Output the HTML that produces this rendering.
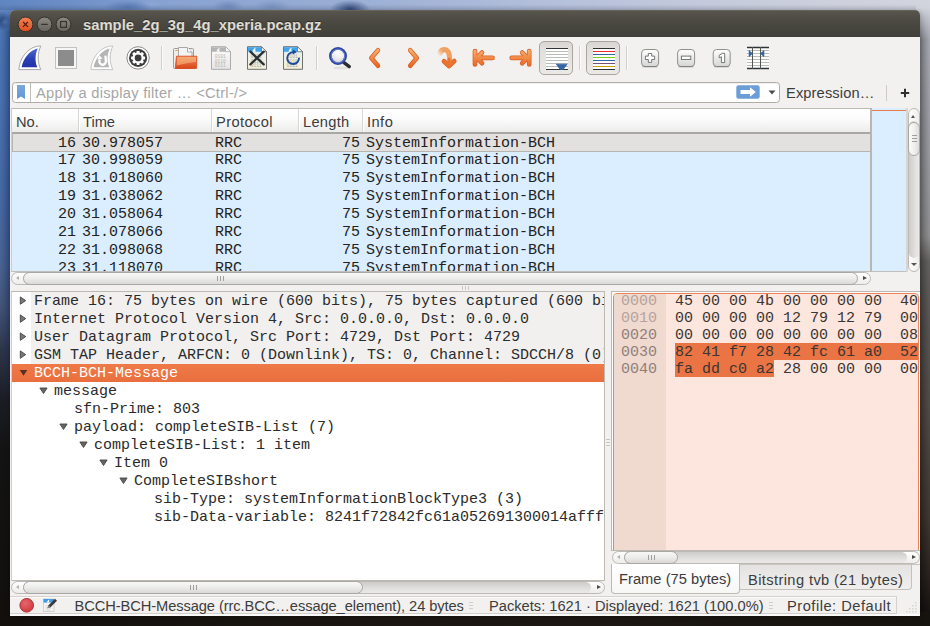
<!DOCTYPE html>
<html>
<head>
<meta charset="utf-8">
<title>sample_2g_3g_4g_xperia.pcap.gz</title>
<style>
*{box-sizing:border-box;margin:0;padding:0}
html,body{width:930px;height:626px;overflow:hidden}
body{position:relative;background:#15110d;font-family:"Liberation Sans",sans-serif;color:#3c3c3c}
.abs{position:absolute}
.ui{font-family:"Liberation Sans",sans-serif;font-size:14.67px;color:#3c3c3c;white-space:nowrap;line-height:18px}
.mono{font-family:"Liberation Mono",monospace;font-size:15px;white-space:pre;line-height:18px;color:#222}
/* wallpaper */
#wp-top{left:0;top:0;width:930px;height:14px;background:
 radial-gradient(ellipse 24px 7px at 128px 7px,rgba(60,95,160,.55),transparent),
 radial-gradient(ellipse 14px 5px at 150px 4px,rgba(150,175,220,.5),transparent),
 radial-gradient(ellipse 16px 6px at 228px 6px,rgba(70,100,155,.4),transparent),
 radial-gradient(ellipse 18px 6px at 272px 6px,rgba(70,100,155,.3),transparent),
 radial-gradient(ellipse 20px 9px at 350px 9px,rgba(25,50,100,.8),transparent),
 linear-gradient(180deg,transparent 0,transparent 4px,rgba(0,0,20,.14) 11px),
 linear-gradient(90deg,#6086c2 0,#6b8dc6 60px,#7897cb 110px,#88a3d2 170px,#90a8d2 260px,#9eb1d6 380px,#b3bfdb 540px,#c4cadc 700px,#cfd2dd 860px,#d2d4de 930px)}
#wp-left{left:0;top:10px;width:14px;height:616px;background:
 radial-gradient(ellipse 5px 4px at 5px 12px,rgba(130,160,210,.45),transparent),
 radial-gradient(ellipse 9px 10px at 2px 11px,rgba(22,50,105,.75),transparent),
 linear-gradient(180deg,#5f85c1 0,#4d76b5 24px,#4b73b1 90px,#486aa6 190px,#4a6592 255px,#46567a 295px,#2e3648 340px,#1b1d24 390px,#131313 440px,#120f0c 616px)}
#wp-left:before{content:"";position:absolute;left:0;top:0;width:14px;height:616px;background:linear-gradient(90deg,rgba(10,30,80,0) 0,rgba(10,30,80,.36) 10px);-webkit-mask:linear-gradient(180deg,transparent 0,#000 22px,#000 290px,transparent 400px);mask:linear-gradient(180deg,transparent 0,#000 22px,#000 290px,transparent 400px)}
#wp-right{left:916px;top:0;width:14px;height:626px;background:
 linear-gradient(90deg,rgba(0,0,0,.44) 4px,rgba(0,0,0,.16) 14px) 0 40px/14px 600px no-repeat,
 linear-gradient(180deg,#d2d4de 0,#c8cbd5 40px,#bcbec6 120px,#b2b3b8 200px,#aeaeb0 236px,#787673 262px,#6a6765 320px,#5e5852 420px,#4a413b 520px,#2a221d 590px,#17130f 620px)}
#wp-right:before{content:"";position:absolute;left:0;top:0;width:14px;height:40px;background:linear-gradient(90deg,rgba(0,0,0,.44) 4px,rgba(0,0,0,.16) 14px);-webkit-mask:linear-gradient(180deg,transparent 8px,#000 40px);mask:linear-gradient(180deg,transparent 8px,#000 40px)}
#wp-bottom{left:0;top:612px;width:930px;height:14px;background:linear-gradient(90deg,#120f0c 0,#1a1511 300px,#1c1712 600px,#16120e 930px)}
/* window */
#win{left:10px;top:10px;width:910px;height:606px;background:#f2f1f0;border-radius:5px 5px 0 0;box-shadow:0 1px 5px rgba(0,0,0,.25);overflow:hidden}
#titlebar{left:0;top:0;width:910px;height:27px;background:linear-gradient(180deg,#57554c 0,#514f47 5px,#47463f 15px,#3f3e39 27px);border-top:1px solid #66635a}
#title{left:73px;top:5px;font-weight:bold;font-size:14.8px;color:#dfdbd2;white-space:nowrap;line-height:18px;text-shadow:0 -1px 0 rgba(0,0,0,.4)}
.wbtn{width:16px;height:16px;border-radius:50%;top:6px;border:1px solid #33312c}

.sbo{border:1px solid #bdbab5;border-radius:7px;background:linear-gradient(#fefefe,#eeedeb)}
.sbov{border:1px solid #bdbab5;border-radius:7px;background:linear-gradient(90deg,#fefefe,#eeedeb)}
.trh{background:linear-gradient(#cdccc9,#e4e3e1 70%,#e9e8e6);border-radius:6px}
.thh{background:linear-gradient(#f8f8f7,#ececeb 50%,#dad9d7);border:1px solid #a9a7a2;border-radius:7px}
.trv{background:linear-gradient(90deg,#cdccc9,#e4e3e1 70%,#e9e8e6);border-radius:6px}
.thv{background:linear-gradient(90deg,#fbfbfa,#f0f0ef 50%,#dddcda);border:1px solid #a9a7a2;border-radius:7px}
.tri{width:0;height:0;border-style:solid}
.grip-h{width:7px;height:5px;background:linear-gradient(90deg,#a19f9c 0 1px,transparent 1px 3px,#a19f9c 3px 4px,transparent 4px 6px,#a19f9c 6px 7px)}
.grip-v{width:5px;height:7px;background:linear-gradient(#a19f9c 0 1px,transparent 1px 3px,#a19f9c 3px 4px,transparent 4px 6px,#a19f9c 6px 7px)}
.sgrip{width:4px;height:7px;background:linear-gradient(#d3d0cb 0 1px,transparent 1px 3px,#d3d0cb 3px 4px,transparent 4px 6px,#d3d0cb 6px 7px)}
</style>
</head>
<body>
<div id="wp-top" class="abs"></div>
<div id="wp-left" class="abs"></div>
<div id="wp-right" class="abs"></div>
<div id="wp-bottom" class="abs"></div>

<div id="win" class="abs">
  <div id="titlebar" class="abs">
    <svg class="abs" style="left:0;top:-1px" width="80" height="27" viewBox="10 10 80 27">
      <defs>
        <linearGradient id="gCl" x1="0" y1="0" x2="0" y2="1"><stop offset="0" stop-color="#f38257"/><stop offset="1" stop-color="#df4f1c"/></linearGradient>
        <linearGradient id="gGr" x1="0" y1="0" x2="0" y2="1"><stop offset="0" stop-color="#8c8a82"/><stop offset="1" stop-color="#64625b"/></linearGradient>
      </defs>
      <circle cx="25.500" cy="24.400" r="7.400" fill="url(#gCl)" stroke="#33312c" stroke-width="1"/>
      <circle cx="44.500" cy="24.400" r="7.400" fill="url(#gGr)" stroke="#33312c" stroke-width="1"/>
      <circle cx="63.500" cy="24.400" r="7.400" fill="url(#gGr)" stroke="#33312c" stroke-width="1"/>
      <path d="M23 21.900l5 5M28 21.900l-5 5" stroke="#4a1e0c" stroke-width="1.300"/>
      <path d="M41.200 24.400h6.600" stroke="#35342f" stroke-width="1.300"/>
      <rect x="60.600" y="21.500" width="5.800" height="5.800" fill="none" stroke="#35342f" stroke-width="1.200"/>
    </svg>
    <div id="title" class="abs">sample_2g_3g_4g_xperia.pcap.gz</div>
  </div>
<!--TOOLBAR-->
<svg class="abs" style="left:0;top:27px" width="910" height="44" viewBox="10 37 910 44">
<defs>
<linearGradient id="gBlue" x1="0" y1="0" x2="0" y2="1"><stop offset="0" stop-color="#5068d0"/><stop offset=".55" stop-color="#2b3fb4"/><stop offset="1" stop-color="#2233a6"/></linearGradient>
<linearGradient id="gOr" gradientUnits="userSpaceOnUse" x1="0" y1="48" x2="0" y2="68"><stop offset="0" stop-color="#f8b676"/><stop offset="1" stop-color="#e85f1c"/></linearGradient>
<linearGradient id="gFold" x1="0" y1="0" x2="0" y2="1"><stop offset="0" stop-color="#f28a5a"/><stop offset="1" stop-color="#d9451a"/></linearGradient>
<linearGradient id="gBtn" x1="0" y1="0" x2="0" y2="1"><stop offset="0" stop-color="#ffffff"/><stop offset="1" stop-color="#d6d6d6"/></linearGradient>
<linearGradient id="gDoc" x1="0" y1="0" x2="0" y2="1"><stop offset="0" stop-color="#fdfdfd"/><stop offset="1" stop-color="#e6e6e6"/></linearGradient>
<linearGradient id="gDocY" x1="0" y1="0" x2="0" y2="1"><stop offset="0" stop-color="#bfe0f7"/><stop offset=".35" stop-color="#eaf1ea"/><stop offset="1" stop-color="#f3f0d8"/></linearGradient>
<path id="fin" d="M40.800 46 C30 45.800 19.800 56 18.900 69.600 L40.800 69.600 C37.300 62 37.300 53.500 40.800 46Z"/>
<path id="finIn" d="M37.800 48.600 C31 49.500 23.500 57.500 21.600 67.300 L37.300 67.300 C34.800 61.500 35 54.500 37.800 48.600Z"/>
</defs>
<!-- fin start -->
<use href="#fin" fill="#fff" stroke="#a8a8a8" stroke-width="1"/>
<use href="#finIn" fill="url(#gBlue)"/>
<!-- stop -->
<rect x="55.5" y="47.5" width="21" height="21" fill="#f6f6f6" stroke="#c2c2c2"/>
<rect x="58" y="50" width="16" height="16" fill="#8c8c8c"/>
<!-- fin restart -->
<g transform="translate(72 0)">
<use href="#fin" fill="#fff" stroke="#c4c4c4" stroke-width="1"/>
<use href="#finIn" fill="#b5b5b5"/>
<path d="M33.400 55.600 L33.900 61.200 A3.300 3.300 0 1 1 28 59.400" fill="none" stroke="#fff" stroke-width="2.300"/>
<path d="M25.300 59.400 L30.600 58.400 L27.200 55.300Z" fill="#fff"/>
</g>
<!-- gear -->
<circle cx="138.1" cy="57.9" r="11.2" fill="#fff" stroke="#8a8a8a" stroke-width="1"/>
<circle cx="138.1" cy="57.9" r="9.1" fill="#3c3c3c"/>
<g transform="translate(138.1 57.9)" fill="#fff">
<circle r="5.6"/>
<g id="teeth"><rect x="-1.5" y="-7" width="3" height="14" rx=".6"/><rect x="-1.5" y="-7" width="3" height="14" rx=".6" transform="rotate(45)"/><rect x="-1.5" y="-7" width="3" height="14" rx=".6" transform="rotate(90)"/><rect x="-1.5" y="-7" width="3" height="14" rx=".6" transform="rotate(135)"/></g>
<circle r="3.4" fill="#3c3c3c"/>
</g>
<!-- separators -->
<g stroke="#d2d0cd" stroke-width="1"><path d="M161.5 46v24M316.5 46v24M579.5 46v24M626.5 46v24"/></g>
<g stroke="#fbfbfa" stroke-width="1"><path d="M162.5 46v24M317.5 46v24M580.5 46v24M627.5 46v24"/></g>
<!-- folder -->
<rect x="173.5" y="48.5" width="20" height="20" rx="1" fill="#ededed" stroke="#9c9c9c"/>
<path d="M175.3 50.5h2.6" stroke="#f0a040" stroke-width="1"/>
<path d="M178.5 47.5h9l4.5 4.5v14h-13.5z" fill="#f4f4f4" stroke="#a8a8a8"/>
<path d="M187.5 47.5v4.5h4.5" fill="#fff" stroke="#a8a8a8"/>
<path d="M176.5 56.2h20.3l-.3 12.3h-21.3z" fill="url(#gFold)" stroke="#d8481a" stroke-width=".8"/>
<path d="M177.3 57h18.7l-.1 5c-6 .5-12 1.500-19.200 3.500z" fill="#f7c58a" opacity=".55"/>
<!-- doc gray -->
<g id="docg">
<path d="M211.500 46.700h14l5 5v17.600h-19z" fill="url(#gDoc)" stroke="#ababab"/>
<path d="M212 47.200h13.500l4.500 4.500h-18z" fill="#b4b4b4"/>
<path d="M216.500 51.700c.3-2.200 1.600-3.600 3.400-4.300-.8 1.500-.8 3 0 4.300z" fill="#f6f6f6"/>
<path d="M225.500 46.700v5h5z" fill="#fbfbfb" stroke="#ababab" stroke-width=".8"/>
<g font-family="Liberation Mono,monospace" font-size="4.600" fill="#b4b4b4"><text x="214.800" y="58">0101</text><text x="214.800" y="62.600">0110</text><text x="214.800" y="67.300">0111</text></g>
</g>
<!-- doc X -->
<g transform="translate(36 0)">
<path d="M211.500 46.700h14l5 5v17.600h-19z" fill="url(#gDocY)" stroke="#6f6f6f"/>
<path d="M212 47.200h13.500l4.500 4.500h-18z" fill="#42a5ec"/>
<path d="M216.500 51.700c.3-2.200 1.600-3.600 3.400-4.300-.8 1.500-.8 3 0 4.300z" fill="#f6fbff"/>
<path d="M225.500 46.700v5h5z" fill="#fdfdf6" stroke="#6f6f6f" stroke-width=".8"/>
<g font-family="Liberation Mono,monospace" font-size="4.600" fill="#a8a89f"><text x="214.800" y="58">0101</text><text x="214.800" y="62.600">0110</text><text x="214.800" y="67.300">0111</text></g>
<path d="M214.400 51.600l13.300 12.800M227.700 51.600l-13.300 12.800" stroke="#2b3032" stroke-width="2.300" stroke-linecap="round"/>
</g>
<!-- doc reload -->
<g transform="translate(72 0)">
<path d="M211.500 46.700h14l5 5v17.600h-19z" fill="url(#gDocY)" stroke="#6f6f6f"/>
<path d="M212 47.200h13.500l4.500 4.500h-18z" fill="#42a5ec"/>
<path d="M216.500 51.700c.3-2.200 1.600-3.600 3.400-4.300-.8 1.500-.8 3 0 4.300z" fill="#f6fbff"/>
<path d="M225.500 46.700v5h5z" fill="#fdfdf6" stroke="#6f6f6f" stroke-width=".8"/>
<g font-family="Liberation Mono,monospace" font-size="4.600" fill="#a8a89f"><text x="214.800" y="58">0101</text><text x="214.800" y="62.600">0110</text><text x="214.800" y="67.300">0111</text></g>
<path d="M227 57.600a5.900 5.900 0 1 1 -5.600-5.400" fill="none" stroke="#1f4a9c" stroke-width="1.900"/>
<path d="M220.800 49.400l4.200 2.500-4.200 2.600z" fill="#1f4a9c"/>
</g>
<!-- magnifier -->
<ellipse cx="341" cy="68" rx="8" ry="1.500" fill="#000" opacity=".07"/>
<path d="M344 62.600l5.300 4" stroke="#2b2b2b" stroke-width="3.400" stroke-linecap="round"/>
<radialGradient id="gGl" cx=".55" cy=".3" r=".7"><stop offset="0" stop-color="#ffffff"/><stop offset=".5" stop-color="#ededed"/><stop offset="1" stop-color="#d4d4d4"/></radialGradient>
<circle cx="338" cy="56" r="7.600" fill="url(#gGl)" stroke="#2a469c" stroke-width="2.800"/>
<circle cx="338" cy="56" r="6.900" fill="none" stroke="#6f88d6" stroke-width=".9"/>
<!-- chevrons -->
<g fill="none" stroke-linecap="round" stroke-linejoin="round">
<path d="M378 50.200l-6.700 7.800 6.700 7.800" stroke="#db5a1c" stroke-width="4.500"/>
<path d="M378 50.200l-6.700 7.800 6.700 7.800" stroke="url(#gOr)" stroke-width="3"/>
<path d="M410.200 50.200l6.600 7.800-6.600 7.800" stroke="#db5a1c" stroke-width="4.500"/>
<path d="M410.200 50.200l6.600 7.800-6.600 7.800" stroke="url(#gOr)" stroke-width="3"/>
<!-- jump -->
<linearGradient id="gJt" gradientUnits="userSpaceOnUse" x1="438" y1="55" x2="445" y2="49"><stop offset="0" stop-color="#f0a060" stop-opacity="0"/><stop offset=".7" stop-color="#f0a060" stop-opacity="1"/></linearGradient>
<path d="M440 53.500c.3-3.800 5.600-5.200 8-2 1.700 2.300 1.900 5.600 1.400 12" stroke="url(#gJt)" stroke-width="5.200"/>
<path d="M444 61.300l5 4.800 5.200-5" stroke="#dc5f22" stroke-width="4.700"/>
<path d="M444 61.300l5 4.800 5.200-5M449 64v-5" stroke="#ec7431" stroke-width="3.200"/>
<!-- first -->
<path d="M475 51.200v13.300M477 57.900h15.500M482 52.600l-5.200 5.300 5.200 5.300" stroke="#dc5f22" stroke-width="4.700"/>
<path d="M475 51.200v13.300M477 57.900h15.500M482 52.600l-5.200 5.300 5.200 5.300" stroke="url(#gOr)" stroke-width="3.200"/>
<!-- last -->
<path d="M529.200 51.200v13.300M527.200 57.900h-15.500M522.200 52.600l5.200 5.300-5.200 5.300" stroke="#dc5f22" stroke-width="4.700"/>
<path d="M529.200 51.200v13.300M527.200 57.900h-15.500M522.200 52.600l5.200 5.300-5.200 5.300" stroke="url(#gOr)" stroke-width="3.200"/>
</g>
<!-- toggle buttons -->
<linearGradient id="gTog" x1="0" y1="0" x2="0" y2="1"><stop offset="0" stop-color="#d6d5d2"/><stop offset=".2" stop-color="#e0dfdc"/><stop offset="1" stop-color="#eae9e6"/></linearGradient>
<rect x="539.500" y="41.500" width="33" height="33" rx="4.500" fill="url(#gTog)" stroke="#aaa69f"/>
<rect x="586.500" y="41.500" width="33" height="33" rx="4.500" fill="url(#gTog)" stroke="#aaa69f"/>
<rect x="546" y="48" width="22" height="22" fill="#fff"/>
<g stroke="#babdb6" stroke-width="1"><path d="M546 51.500h22M546 54.500h22M546 57.500h22M546 60.500h22M546 63.500h22M546 66.500h22"/></g>
<g stroke="#2e3436" stroke-width="1.200"><path d="M546 48.500h22M546 69.500h22"/></g>
<path d="M556.300 64.200h10.800l-4 5.300h-2.800z" fill="#3465a4" stroke="#3465a4" stroke-width=".8" stroke-linejoin="round"/>
<rect x="593" y="48" width="22" height="22" fill="#fff"/>
<g stroke-width="1.200"><path d="M593 48.500h22" stroke="#2e3436"/><path d="M593 51.500h22" stroke="#ef2929"/><path d="M593 54.500h22" stroke="#3465a4"/><path d="M593 57.500h22" stroke="#73d216"/><path d="M593 60.500h22" stroke="#3465a4"/><path d="M593 63.500h22" stroke="#75507b"/><path d="M593 66.500h22" stroke="#c4a000"/><path d="M593 69.500h22" stroke="#2e3436"/></g>
<!-- zoom buttons -->
<g id="zb"><rect x="641.600" y="49.500" width="17" height="17" rx="3.500" fill="url(#gBtn)" stroke="#8f908a"/><path d="M642.500 66.800h15" stroke="#6a6b66" stroke-width=".8" opacity=".7"/></g>
<use href="#zb" x="36"/><use href="#zb" x="71.600"/>
<path d="M648.300 53.500h3.400v2.600h2.900v3.400h-2.900v2.900h-3.400v-2.900h-2.900v-3.400h2.900z" fill="#fff" stroke="#686a66" stroke-width=".9"/>
<rect x="681.400" y="56.100" width="9.400" height="3.400" fill="#fff" stroke="#686a66" stroke-width=".9"/>
<path d="M719.200 55.300l3.200-2h2.300v9.300h-3.300v-5.800l-2.200 1z" fill="#fff" stroke="#686a66" stroke-width=".9" stroke-linejoin="round"/>
<!-- resize cols -->
<rect x="747" y="47" width="22" height="22" fill="#fff"/>
<g stroke="#babdb6" stroke-width="1"><path d="M747 50.500h22M747 53.500h22M747 56.500h22M747 59.500h22M747 62.500h22M747 65.500h22"/></g>
<g stroke="#2e3436" stroke-width="1.300"><path d="M747 47.500h22M747 68.500h22"/></g>
<g stroke="#555753" stroke-width="1"><path d="M752.500 47v22M760.500 47v22"/></g>
<path d="M749 50.500l3.600 3.100-3.600 3.100z" fill="#3465a4" stroke="#3465a4" stroke-width=".6" stroke-linejoin="round"/>
<path d="M764 50.500l-3.600 3.100 3.600 3.100z" fill="#3465a4" stroke="#3465a4" stroke-width=".6" stroke-linejoin="round"/>

</svg>
<!--/TOOLBAR-->
<!--FILTER-->
<div class="abs" style="left:2px;top:72px;width:768px;height:21px;background:#fff;border:1px solid #b0aca6;border-radius:3.500px;box-shadow:inset 0 1px 1px rgba(0,0,0,.06)"></div>
<div class="abs" style="left:20px;top:73px;width:1px;height:19px;background:#c1beb9"></div>
<svg class="abs" style="left:7px;top:75px" width="8" height="14" viewBox="0 0 8 14"><defs><linearGradient id="gBk" x1="0" y1="0" x2="0" y2="1"><stop offset="0" stop-color="#7ca8dc"/><stop offset="1" stop-color="#6197d5"/></linearGradient></defs><path d="M0 0h8v14l-4-2.400-4 2.400z" fill="url(#gBk)"/></svg>
<div id="ph" class="abs ui" style="left:26px;top:74px;color:#a6a6a6;letter-spacing:.28px">Apply a display filter … &lt;Ctrl-/&gt;</div>
<svg class="abs" style="left:726px;top:75px" width="24" height="14" viewBox="0 0 24 14"><rect x=".3" y=".2" width="23.400" height="13.600" rx="2.200" fill="#6c9dd6"/><path d="M4.500 5h9.500v-2.800l5.800 4.800-5.800 4.800v-2.800h-9.500z" fill="#fff"/></svg>
<svg class="abs" style="left:758px;top:80px" width="8" height="5" viewBox="0 0 8 5"><path d="M.6 .5h6.800l-3.400 4z" fill="#4a4a4a"/></svg>
<div id="expr" class="abs ui" style="left:776px;top:74px;letter-spacing:.12px">Expression…</div>
<div class="abs" style="left:876px;top:75px;width:1px;height:16px;background:#d0cdc8"></div>
<svg class="abs" style="left:890px;top:78px" width="10" height="10" viewBox="0 0 10 10"><path d="M5 .8v8.400M.8 5h8.400" stroke="#2f2f2f" stroke-width="2"/></svg>
<!--/FILTER-->
<!--PLIST-->
<div id="plist" class="abs" style="left:1px;top:98px;width:859px;height:163px;background:#dbeeff;border-top:1px solid #bebab4;border-left:1px solid #cfccc7;overflow:hidden">
<div class="abs" style="left:0;top:0;width:860px;height:24px;background:linear-gradient(#ffffff 0,#fbfbfb 45%,#ececeb 100%);border-bottom:1px solid #a9a7a3"></div>
<div class="abs" style="left:66px;top:0;width:1px;height:23px;background:#d8d6d2"></div><div class="abs" style="left:67px;top:0;width:1px;height:23px;background:#fff"></div>
<div class="abs" style="left:199px;top:0;width:1px;height:23px;background:#d8d6d2"></div><div class="abs" style="left:200px;top:0;width:1px;height:23px;background:#fff"></div>
<div class="abs" style="left:286px;top:0;width:1px;height:23px;background:#d8d6d2"></div><div class="abs" style="left:287px;top:0;width:1px;height:23px;background:#fff"></div>
<div class="abs" style="left:350px;top:0;width:1px;height:23px;background:#d8d6d2"></div><div class="abs" style="left:351px;top:0;width:1px;height:23px;background:#fff"></div>
<div class="abs ui hd" style="left:4px;top:4px;letter-spacing:0px">No.</div>
<div class="abs ui hd" style="left:71px;top:4px;letter-spacing:0px">Time</div>
<div class="abs ui hd" style="left:204px;top:4px;letter-spacing:.4px">Protocol</div>
<div class="abs ui hd" style="left:291px;top:4px;letter-spacing:.27px">Length</div>
<div class="abs ui hd" style="left:355px;top:4px;letter-spacing:.45px">Info</div>
<div class="abs" style="left:0;top:24px;width:860px;height:19px;background:#e2e1e0;border:1px solid #b7b5b2;border-top-color:#a9a7a3"></div>
<div class="abs mono" style="left:0;top:26px;width:64px;text-align:right">16</div>
<div class="abs mono" style="left:70px;top:26px">30.978057</div>
<div class="abs mono" style="left:203px;top:26px">RRC</div>
<div class="abs mono" style="left:288px;top:26px;width:60px;text-align:right">75</div>
<div class="abs mono" style="left:354px;top:26px">SystemInformation-BCH</div>
<div class="abs mono" style="left:0;top:43px;width:64px;text-align:right">17</div>
<div class="abs mono" style="left:70px;top:43px">30.998059</div>
<div class="abs mono" style="left:203px;top:43px">RRC</div>
<div class="abs mono" style="left:288px;top:43px;width:60px;text-align:right">75</div>
<div class="abs mono" style="left:354px;top:43px">SystemInformation-BCH</div>
<div class="abs mono" style="left:0;top:61px;width:64px;text-align:right">18</div>
<div class="abs mono" style="left:70px;top:61px">31.018060</div>
<div class="abs mono" style="left:203px;top:61px">RRC</div>
<div class="abs mono" style="left:288px;top:61px;width:60px;text-align:right">75</div>
<div class="abs mono" style="left:354px;top:61px">SystemInformation-BCH</div>
<div class="abs mono" style="left:0;top:79px;width:64px;text-align:right">19</div>
<div class="abs mono" style="left:70px;top:79px">31.038062</div>
<div class="abs mono" style="left:203px;top:79px">RRC</div>
<div class="abs mono" style="left:288px;top:79px;width:60px;text-align:right">75</div>
<div class="abs mono" style="left:354px;top:79px">SystemInformation-BCH</div>
<div class="abs mono" style="left:0;top:97px;width:64px;text-align:right">20</div>
<div class="abs mono" style="left:70px;top:97px">31.058064</div>
<div class="abs mono" style="left:203px;top:97px">RRC</div>
<div class="abs mono" style="left:288px;top:97px;width:60px;text-align:right">75</div>
<div class="abs mono" style="left:354px;top:97px">SystemInformation-BCH</div>
<div class="abs mono" style="left:0;top:115px;width:64px;text-align:right">21</div>
<div class="abs mono" style="left:70px;top:115px">31.078066</div>
<div class="abs mono" style="left:203px;top:115px">RRC</div>
<div class="abs mono" style="left:288px;top:115px;width:60px;text-align:right">75</div>
<div class="abs mono" style="left:354px;top:115px">SystemInformation-BCH</div>
<div class="abs mono" style="left:0;top:133px;width:64px;text-align:right">22</div>
<div class="abs mono" style="left:70px;top:133px">31.098068</div>
<div class="abs mono" style="left:203px;top:133px">RRC</div>
<div class="abs mono" style="left:288px;top:133px;width:60px;text-align:right">75</div>
<div class="abs mono" style="left:354px;top:133px">SystemInformation-BCH</div>
<div class="abs mono" style="left:0;top:151px;width:64px;text-align:right">23</div>
<div class="abs mono" style="left:70px;top:151px">31.118070</div>
<div class="abs mono" style="left:203px;top:151px">RRC</div>
<div class="abs mono" style="left:288px;top:151px;width:60px;text-align:right">75</div>
<div class="abs mono" style="left:354px;top:151px">SystemInformation-BCH</div>
</div>
<div class="abs" style="left:860px;top:98px;width:36.500px;height:163px;background:#dbeeff;border-left:2px solid #b9b5b0"></div>
<div class="abs" style="left:862px;top:100px;width:34.500px;height:1px;background:#ea7a4f"></div>
<div class="abs" style="left:1px;top:261px;width:896px;height:1px;background:#c3c0bb"></div>
<div class="abs sbo" style="left:1px;top:262px;width:860px;height:13px"></div>
<div class="abs trh" style="left:13px;top:263px;width:834px;height:11px"></div>
<div class="abs tri" style="left:6px;top:266px;border-width:2.500px 3.500px 2.500px 0;border-color:transparent #b3b1ae transparent transparent"></div>
<div class="abs tri" style="left:852.500px;top:266px;border-width:2.500px 0 2.500px 4px;border-color:transparent transparent transparent #4a4a4a"></div>
<div class="abs thh" style="left:13px;top:262px;width:834.500px;height:13px"></div>
<div class="abs grip-h" style="left:207px;top:266px"></div>
<div class="abs" style="left:896px;top:98px;width:1.500px;height:164px;background:#d8d5d0"></div>
<div class="abs sbov" style="left:897.500px;top:98px;width:12px;height:163.500px"></div>
<div class="abs trv" style="left:898.500px;top:111px;width:10px;height:137px"></div>
<div class="abs tri" style="left:901px;top:104.500px;border-width:0 2.500px 3px 2.500px;border-color:transparent transparent #555 transparent"></div>
<div class="abs tri" style="left:900.500px;top:252.500px;border-width:3.500px 3px 0 3px;border-color:#555 transparent transparent transparent"></div>
<div class="abs thv" style="left:897.500px;top:112px;width:12px;height:34px"></div>
<div class="abs grip-v" style="left:901.500px;top:125px"></div>
<!--/PLIST-->
<!--DETAIL-->
<div id="detail" class="abs" style="left:1px;top:281px;width:594px;height:290px;background:#fff;border:1px solid #bdb9b3;border-left-color:#d0cdc8;overflow:hidden">
<div class="abs" style="left:19px;top:0;width:580px;height:72px;background:#f1f0ef"></div>
<div class="abs" style="left:0;top:72px;width:600px;height:18px;background:linear-gradient(#ef7948,#e96f3e)"></div>
<div class="abs mono" style="left:22px;top:1px;color:#2b2b2b">Frame 16: 75 bytes on wire (600 bits), 75 bytes captured (600 bits)</div>
<svg class="abs" style="left:7px;top:4px" width="8" height="10" viewBox="0 0 8 10"><path d="M1.300 .9v7.400l5.400-3.700z" fill="#777" stroke="#444" stroke-width=".9" stroke-linejoin="round"/></svg>
<div class="abs mono" style="left:22px;top:19px;color:#2b2b2b">Internet Protocol Version 4, Src: 0.0.0.0, Dst: 0.0.0.0</div>
<svg class="abs" style="left:7px;top:22px" width="8" height="10" viewBox="0 0 8 10"><path d="M1.300 .9v7.400l5.400-3.700z" fill="#777" stroke="#444" stroke-width=".9" stroke-linejoin="round"/></svg>
<div class="abs mono" style="left:22px;top:37px;color:#2b2b2b">User Datagram Protocol, Src Port: 4729, Dst Port: 4729</div>
<svg class="abs" style="left:7px;top:40px" width="8" height="10" viewBox="0 0 8 10"><path d="M1.300 .9v7.400l5.400-3.700z" fill="#777" stroke="#444" stroke-width=".9" stroke-linejoin="round"/></svg>
<div class="abs mono" style="left:22px;top:55px;color:#2b2b2b">GSM TAP Header, ARFCN: 0 (Downlink), TS: 0, Channel: SDCCH/8 (0)</div>
<svg class="abs" style="left:7px;top:58px" width="8" height="10" viewBox="0 0 8 10"><path d="M1.300 .9v7.400l5.400-3.700z" fill="#777" stroke="#444" stroke-width=".9" stroke-linejoin="round"/></svg>
<div class="abs mono" style="left:22px;top:73px;color:#fff">BCCH-BCH-Message</div>
<svg class="abs" style="left:7px;top:77px" width="9" height="8" viewBox="0 0 9 8"><path d="M.7 1h7.600l-3.800 5.800z" fill="#5a3020"/></svg>
<div class="abs mono" style="left:42px;top:91px;color:#2b2b2b">message</div>
<svg class="abs" style="left:27px;top:95px" width="9" height="8" viewBox="0 0 9 8"><path d="M.9 1h7.200l-3.600 5.500z" fill="#666" stroke="#444" stroke-width=".9" stroke-linejoin="round"/></svg>
<div class="abs mono" style="left:62px;top:109px;color:#2b2b2b">sfn-Prime: 803</div>
<div class="abs mono" style="left:62px;top:127px;color:#2b2b2b">payload: completeSIB-List (7)</div>
<svg class="abs" style="left:47px;top:131px" width="9" height="8" viewBox="0 0 9 8"><path d="M.9 1h7.200l-3.600 5.500z" fill="#666" stroke="#444" stroke-width=".9" stroke-linejoin="round"/></svg>
<div class="abs mono" style="left:82px;top:145px;color:#2b2b2b">completeSIB-List: 1 item</div>
<svg class="abs" style="left:67px;top:149px" width="9" height="8" viewBox="0 0 9 8"><path d="M.9 1h7.200l-3.600 5.500z" fill="#666" stroke="#444" stroke-width=".9" stroke-linejoin="round"/></svg>
<div class="abs mono" style="left:102px;top:163px;color:#2b2b2b">Item 0</div>
<svg class="abs" style="left:87px;top:167px" width="9" height="8" viewBox="0 0 9 8"><path d="M.9 1h7.200l-3.600 5.500z" fill="#666" stroke="#444" stroke-width=".9" stroke-linejoin="round"/></svg>
<div class="abs mono" style="left:122px;top:181px;color:#2b2b2b">CompleteSIBshort</div>
<svg class="abs" style="left:107px;top:185px" width="9" height="8" viewBox="0 0 9 8"><path d="M.9 1h7.200l-3.600 5.500z" fill="#666" stroke="#444" stroke-width=".9" stroke-linejoin="round"/></svg>
<div class="abs mono" style="left:142px;top:199px;color:#2b2b2b">sib-Type: systemInformationBlockType3 (3)</div>
<div class="abs mono" style="left:142px;top:217px;color:#2b2b2b">sib-Data-variable: 8241f72842fc61a052691300014afffaddc0a2</div>
</div>
<div class="abs sbo" style="left:1px;top:571px;width:594px;height:13px"></div>
<div class="abs trh" style="left:13px;top:572px;width:568px;height:11px"></div>
<div class="abs tri" style="left:6px;top:575px;border-width:2.500px 3.500px 2.500px 0;border-color:transparent #b3b1ae transparent transparent"></div>
<div class="abs tri" style="left:586.500px;top:575px;border-width:2.500px 0 2.500px 4px;border-color:transparent transparent transparent #4a4a4a"></div>
<div class="abs thh" style="left:13px;top:571px;width:339.500px;height:13px"></div>
<div class="abs grip-h" style="left:180px;top:575px"></div>
<div class="abs" style="left:452px;top:276px;width:7px;height:4px;background:linear-gradient(90deg,#c9c6c1 0 1px,transparent 1px 3px,#c9c6c1 3px 4px,transparent 4px 6px,#c9c6c1 6px 7px)"></div>
<div class="abs" style="left:596px;top:429px;width:4px;height:7px;background:linear-gradient(#c9c6c1 0 1px,transparent 1px 3px,#c9c6c1 3px 4px,transparent 4px 6px,#c9c6c1 6px 7px)"></div>
<!--/DETAIL-->
<!--BYTES-->
<div id="bytes" class="abs" style="left:601px;top:281px;width:309px;height:260px;background:#fff;border:1px solid #bdb9b3;border-right:none;overflow:hidden">
<div class="abs" style="left:1px;top:1px;width:306px;height:262px;background:#fde6de;border:1px solid #ee8459;border-radius:4px 4px 0 0;overflow:hidden">
<div class="abs" style="left:0;top:0;width:52px;height:262px;background:#f0d9cf"></div>
<div class="abs" style="left:61px;top:49px;width:250px;height:17px;background:#ea7443"></div>
<div class="abs" style="left:61px;top:66px;width:99px;height:17px;background:#ea7443"></div>
<div class="abs mono" style="left:7px;top:-1px;line-height:17px;color:#b5a49d">0000</div>
<div class="abs mono" style="left:61px;top:-1px;line-height:17px;color:#3b3533">45 00 00 4b 00 00 00 00  40 11 00 00</div>
<div class="abs mono" style="left:7px;top:16px;line-height:17px;color:#b5a49d">0010</div>
<div class="abs mono" style="left:61px;top:16px;line-height:17px;color:#3b3533">00 00 00 00 12 79 12 79  00 37 00 00</div>
<div class="abs mono" style="left:7px;top:33px;line-height:17px;color:#8f7f79">0020</div>
<div class="abs mono" style="left:61px;top:33px;line-height:17px;color:#3b3533">00 00 00 00 00 00 00 00  08 00 00 00</div>
<div class="abs mono" style="left:7px;top:50px;line-height:17px;color:#8f7f79">0030</div>
<div class="abs mono" style="left:61px;top:50px;line-height:17px;color:#3b3533">82 41 f7 28 42 fc 61 a0  52 69 13 00</div>
<div class="abs mono" style="left:7px;top:67px;line-height:17px;color:#8f7f79">0040</div>
<div class="abs mono" style="left:61px;top:67px;line-height:17px;color:#3b3533">fa dd c0 a2 28 00 00 00  00 00 00 00</div>
</div></div>
<div class="abs sbo" style="left:602px;top:541px;width:307.500px;height:13px"></div>
<div class="abs trh" style="left:614px;top:542px;width:282.500px;height:11px"></div>
<div class="abs tri" style="left:607px;top:545px;border-width:2.500px 3.500px 2.500px 0;border-color:transparent #b3b1ae transparent transparent"></div>
<div class="abs tri" style="left:901.500px;top:545px;border-width:2.500px 0 2.500px 4px;border-color:transparent transparent transparent #4a4a4a"></div>
<div class="abs thh" style="left:614px;top:541px;width:53.500px;height:13px"></div>
<div class="abs grip-h" style="left:638px;top:545px"></div>
<div class="abs" style="left:728px;top:555px;width:174px;height:25px;background:linear-gradient(#e4e3e1,#f0efee);border:1px solid #c4c1bb;border-top:none;border-radius:0 0 4px 4px"></div>
<div class="abs" style="left:729px;top:554px;width:181px;height:1px;background:#c9c6c1"></div>
<div id="tab2" class="abs ui" style="left:738px;top:560.500px;letter-spacing:.39px">Bitstring tvb (21 bytes)</div>
<div class="abs" style="left:601px;top:554px;width:129px;height:30px;background:linear-gradient(#ffffff,#f7f7f6);border:1px solid #bdb9b3;border-top:none;border-radius:0 0 4px 4px"></div>
<div id="tab1" class="abs ui" style="left:609px;top:560px;letter-spacing:.04px">Frame (75 bytes)</div>
<!--/BYTES-->
<!--STATUS-->
<div class="abs" style="left:0;top:586px;width:887px;height:1px;background:#d5d2cd"></div>
<div class="abs" style="left:0;top:587px;width:886px;height:1px;background:#fbfbfa"></div>
<div class="abs" style="left:0;top:603px;width:887px;height:1px;background:#d2cfca"></div><div class="abs" style="left:886px;top:586px;width:1px;height:18px;background:#d5d2cd"></div>
<div class="abs" style="left:0;top:604px;width:910px;height:2px;background:#fafafa"></div>
<svg class="abs" style="left:8px;top:587px" width="17" height="17" viewBox="0 0 17 17"><defs><radialGradient id="gRed" cx=".4" cy=".35" r=".7"><stop offset="0" stop-color="#e6656b"/><stop offset="1" stop-color="#d3383f"/></radialGradient></defs><circle cx="8.700" cy="8.300" r="6.800" fill="url(#gRed)" stroke="#a5323a" stroke-width="1"/></svg>
<svg class="abs" style="left:32px;top:587px" width="17" height="16" viewBox="0 0 17 16"><rect x="1.500" y="2" width="10.500" height="12.500" fill="#f4f4f2" stroke="#c9c9c6" stroke-width=".8"/><rect x="1.500" y="2" width="10.500" height="3.600" fill="#3f9be8"/><path d="M5 5.600c.2-1.600 1-2.600 2.300-3.200-.5 1.100-.5 2.200 0 3.200z" fill="#fff"/><path d="M3.500 9h6M3.500 11h6M3.500 13h5" stroke="#c8c8c4" stroke-width=".7"/><path d="M5.500 11.200l1-3 6.500-6.500 2 2-6.500 6.500z" fill="#3a3a3a"/><path d="M5.500 11.200l1-3 2 2z" fill="#8a8a8a"/></svg>
<div id="st1" class="abs ui" style="left:64.500px;top:586.500px;letter-spacing:-.08px">BCCH-BCH-Message (rrc.BCC…essage_element), 24 bytes</div>
<div id="st2" class="abs ui" style="left:479px;top:586.500px">Packets: 1621 · Displayed: 1621 (100.0%)</div>
<div id="st3" class="abs ui" style="left:777px;top:586.500px;letter-spacing:.5px">Profile: Default</div>
<div class="abs sgrip" style="left:459px;top:592px"></div><div class="abs sgrip" style="left:759px;top:592px"></div>
<svg class="abs" style="left:894px;top:592px" width="14" height="12" viewBox="0 0 14 12"><g fill="#d9d6d1"><rect x="11" y="0" width="1.500" height="1.500"/><rect x="8" y="3" width="1.500" height="1.500"/><rect x="11" y="3" width="1.500" height="1.500"/><rect x="5" y="6" width="1.500" height="1.500"/><rect x="8" y="6" width="1.500" height="1.500"/><rect x="11" y="6" width="1.500" height="1.500"/><rect x="2" y="9" width="1.500" height="1.500"/><rect x="5" y="9" width="1.500" height="1.500"/><rect x="8" y="9" width="1.500" height="1.500"/><rect x="11" y="9" width="1.500" height="1.500"/></g></svg>
<!--/STATUS-->
</div>
</body>
</html>
